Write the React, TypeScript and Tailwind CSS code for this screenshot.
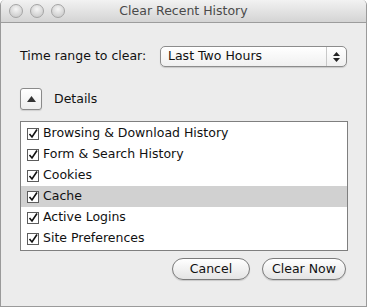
import React from 'react';

const font = { fontFamily: '"Lucida Grande", "DejaVu Sans", sans-serif' };

const items = [
  'Browsing & Download History',
  'Form & Search History',
  'Cookies',
  'Cache',
  'Active Logins',
  'Site Preferences',
];

const Light = () => (
  <div className="w-[14px] h-[14px] rounded-full border border-[#a4a4a4] bg-[radial-gradient(circle_at_50%_35%,#f6f6f6_0%,#d9d9d9_55%,#c4c4c4_100%)]" />
);

const Check = () => (
  <div className="w-[12px] h-[12px] border border-[#5c5c5c] bg-white flex items-center justify-center shrink-0">
    <svg width="10" height="10" viewBox="0 0 10 10">
      <path d="M1.5 5 L4 8 L9 0.5" fill="none" stroke="#111" strokeWidth="1.6" />
    </svg>
  </div>
);

const App = () => {
  return (
    <div className="w-[367px] h-[308px] bg-white text-[#111]" style={font}>
      <div className="w-[367px] h-[307px] flex flex-col border-l border-r border-b border-[#9a9a9a] bg-[#ececec] rounded-t-[5px] overflow-hidden">
        <div className="h-[23px] shrink-0 flex items-center relative border-b border-[#9c9c9c] bg-gradient-to-b from-[#f2f2f2] to-[#d4d4d4]">
          <div className="flex gap-[7px] pl-[8px]">
            <Light />
            <Light />
            <Light />
          </div>
          <div className="absolute inset-0 flex items-center justify-center text-[12.5px] text-[#4a4a4a]">
            Clear Recent History
          </div>
        </div>

        <div className="flex flex-col px-[19px]">
          <div className="flex items-center mt-[23px] h-[21px]">
            <span className="text-[12.5px] w-[140px]">Time range to clear:</span>
            <div className="ml-auto w-[187px] h-[21px] flex items-center rounded-[5px] border border-[#8c8c8c] bg-gradient-to-b from-white to-[#f0f0f0] shadow-[0_1px_1px_rgba(0,0,0,0.15)]">
              <span className="flex-1 pl-[7px] text-[12.5px]">Last Two Hours</span>
              <div className="w-[20px] h-full border-l border-[#c8c8c8] flex flex-col items-center justify-center gap-[2px]">
                <svg width="7" height="4" viewBox="0 0 7 4"><path d="M3.5 0 L7 4 L0 4 Z" fill="#222" /></svg>
                <svg width="7" height="4" viewBox="0 0 7 4"><path d="M0 0 L7 0 L3.5 4 Z" fill="#222" /></svg>
              </div>
            </div>
          </div>

          <div className="flex items-center mt-[21px] h-[22px]">
            <div className="w-[22px] h-[22px] rounded-[3px] border border-[#8a8a8a] bg-gradient-to-b from-white to-[#ededed] flex items-center justify-center shadow-[0_1px_1px_rgba(0,0,0,0.12)]">
              <svg width="9" height="6" viewBox="0 0 9 6"><path d="M4.5 0 L9 6 L0 6 Z" fill="#333" /></svg>
            </div>
            <span className="ml-[12px] text-[12.5px]">Details</span>
          </div>

          <div className="mt-[11px] w-[328px] border border-[#7f7f7f] bg-white py-[1px] flex flex-col">
            {items.map((t) => (
              <div
                key={t}
                className={`h-[21px] flex items-center pl-[6px] gap-[4px] text-[12.5px] ${t === 'Cache' ? 'bg-[#d1d1d1]' : ''}`}
              >
                <Check />
                <span>{t}</span>
              </div>
            ))}
          </div>

          <div className="flex justify-end gap-[12px] mt-[7px] pr-[1px]">
            <button className="w-[78px] h-[22px] rounded-full border border-[#7a7a7a] bg-gradient-to-b from-white to-[#e4e4e4] text-[12.5px] shadow-[0_1px_1px_rgba(0,0,0,0.15)]">
              Cancel
            </button>
            <button className="w-[84px] h-[22px] rounded-full border border-[#7a7a7a] bg-gradient-to-b from-white to-[#e4e4e4] text-[12.5px] shadow-[0_1px_1px_rgba(0,0,0,0.15)]">
              Clear Now
            </button>
          </div>
        </div>
      </div>
    </div>
  );
};

export default App;
